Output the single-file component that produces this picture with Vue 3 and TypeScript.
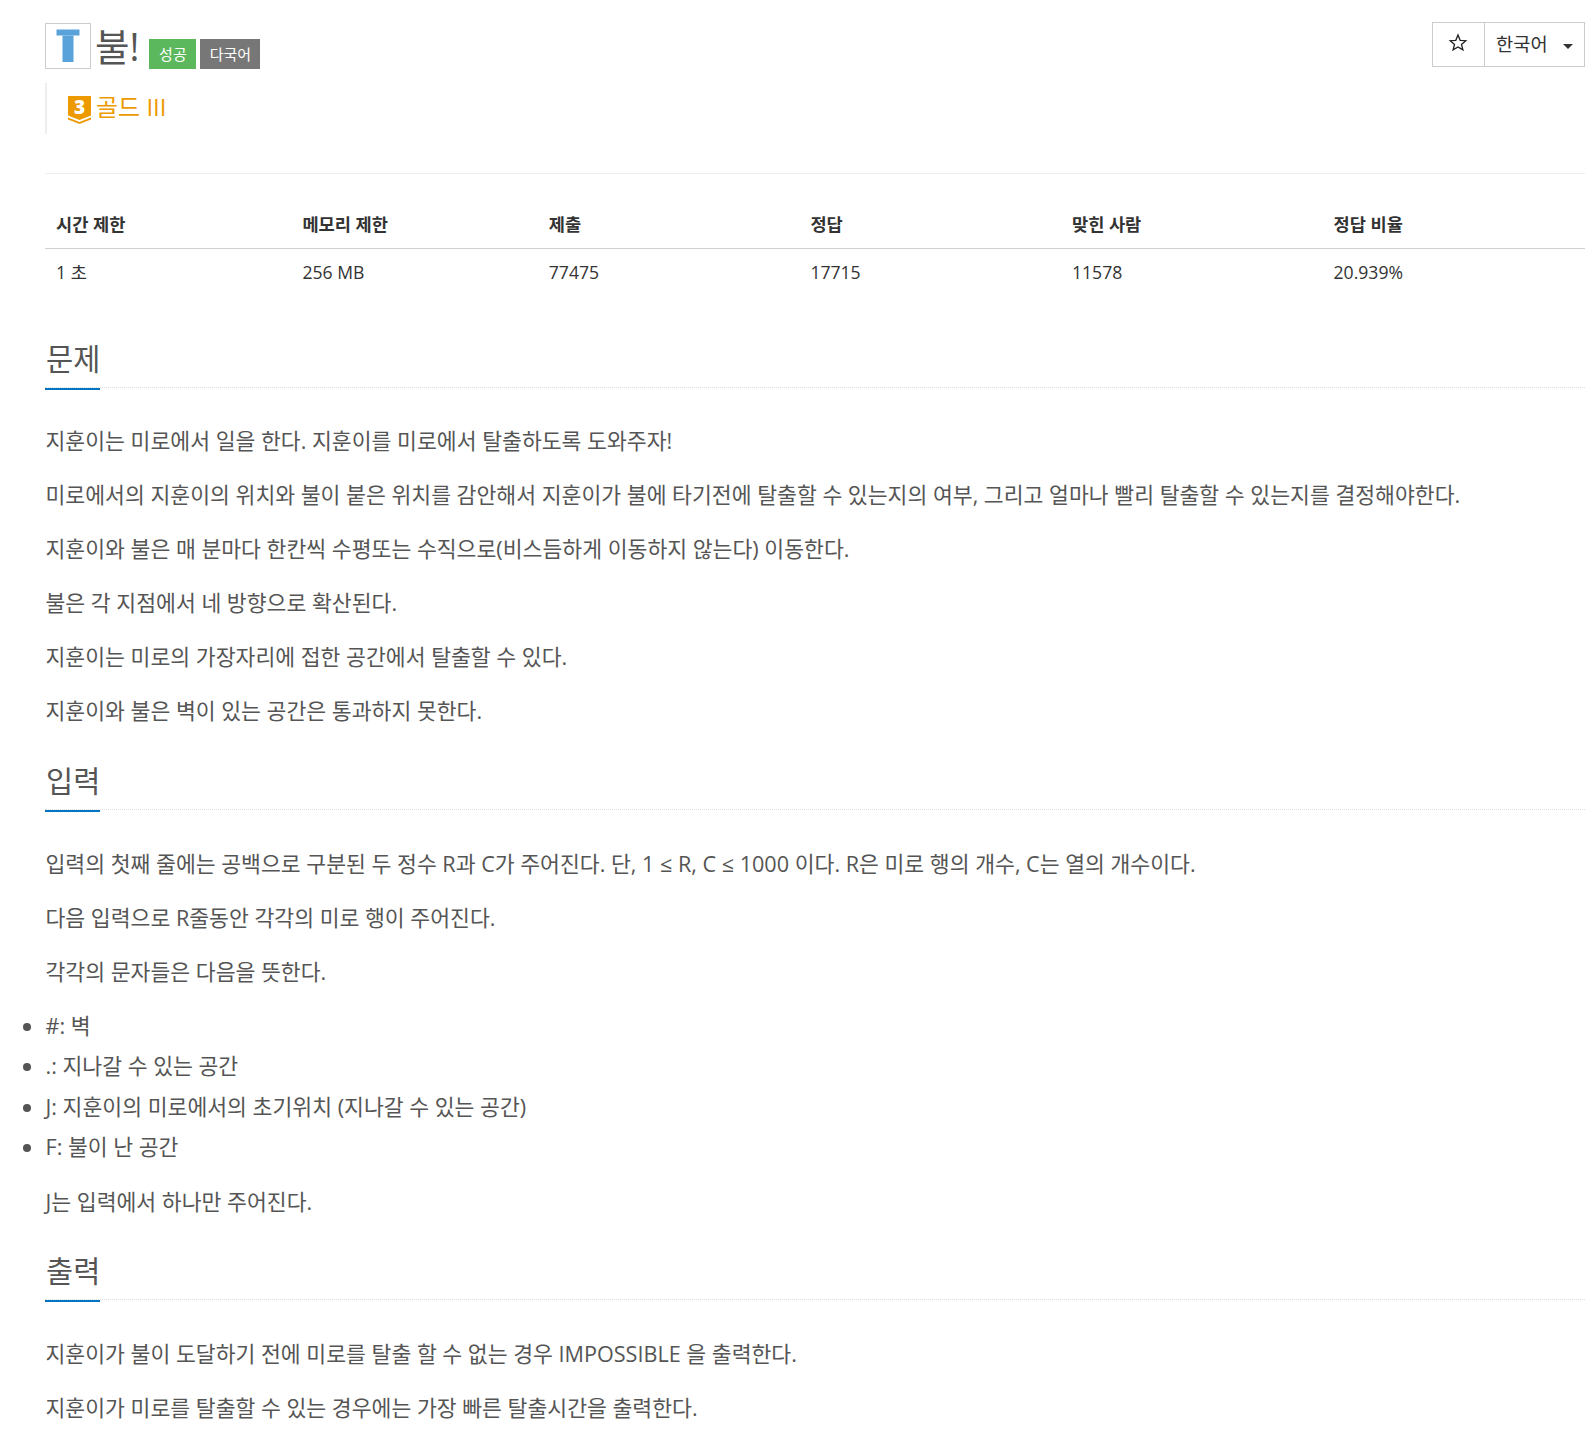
<script setup lang="ts">
const stats = [
  { label: '시간 제한', value: '1 초' },
  { label: '메모리 제한', value: '256 MB' },
  { label: '제출', value: '77475' },
  { label: '정답', value: '17715' },
  { label: '맞힌 사람', value: '11578' },
  { label: '정답 비율', value: '20.939%' }
];

const problem = [
  '지훈이는 미로에서 일을 한다. 지훈이를 미로에서 탈출하도록 도와주자!',
  '미로에서의 지훈이의 위치와 불이 붙은 위치를 감안해서 지훈이가 불에 타기전에 탈출할 수 있는지의 여부, 그리고 얼마나 빨리 탈출할 수 있는지를 결정해야한다.',
  '지훈이와 불은 매 분마다 한칸씩 수평또는 수직으로(비스듬하게 이동하지 않는다) 이동한다.',
  '불은 각 지점에서 네 방향으로 확산된다.',
  '지훈이는 미로의 가장자리에 접한 공간에서 탈출할 수 있다.',
  '지훈이와 불은 벽이 있는 공간은 통과하지 못한다.'
];

const input = [
  '입력의 첫째 줄에는 공백으로 구분된 두 정수 R과 C가 주어진다. 단, 1 ≤ R, C ≤ 1000 이다. R은 미로 행의 개수, C는 열의 개수이다.',
  '다음 입력으로 R줄동안 각각의 미로 행이 주어진다.',
  '각각의 문자들은 다음을 뜻한다.'
];

const legend = ['#: 벽', '.: 지나갈 수 있는 공간', 'J: 지훈이의 미로에서의 초기위치 (지나갈 수 있는 공간)', 'F: 불이 난 공간'];

const output = [
  '지훈이가 불이 도달하기 전에 미로를 탈출 할 수 없는 경우 IMPOSSIBLE 을 출력한다.',
  '지훈이가 미로를 탈출할 수 있는 경우에는 가장 빠른 탈출시간을 출력한다.'
];
</script>

<template>
  <div class="page">
    <header class="head">
      <div class="title-row">
        <span class="logo">
          <svg width="44" height="44" viewBox="0 0 44 44">
            <path d="M10.500 5.500h23v6h-23z" fill="#5aa2da" />
            <path d="M16.500 11.500h11v26.500h-11z" fill="#5aa2da" />
          </svg>
        </span>
        <h1 class="title">불!</h1>
        <span class="badge ok">성공</span>
        <span class="badge multi">다국어</span>
        <div class="btn-group">
          <span class="btn star">
            <svg width="20" height="20" viewBox="0 0 20 20">
              <path d="M10 2l2.200 5.300 5.600.4-4.300 3.700 1.400 5.500-4.900-3-4.900 3 1.400-5.500-4.300-3.700 5.600-.4z" fill="none" stroke="#222" stroke-width="1.300" />
            </svg>
          </span>
          <span class="btn lang">한국어<i class="caret"></i></span>
        </div>
      </div>
      <div class="tier">
        <span class="tier-icon">
          <svg width="23" height="28" viewBox="0 0 23 28">
            <path d="M0 0h23v19.500l-11.500 4.500-11.500-4.500z" fill="#ec9a00" />
            <path d="M0 21.500l11.500 4.500 11.500-4.500v2l-11.500 4.500-11.500-4.500z" fill="#ec9a00" />
          </svg>
          <span class="tier-num">3</span>
        </span>
        <span class="tier-name">골드 III</span>
      </div>
    </header>

    <div class="stats">
      <div v-for="s in stats" :key="s.label" class="stat-head">{{ s.label }}</div>
      <div v-for="s in stats" :key="s.value" class="stat-cell">{{ s.value }}</div>
    </div>

    <section class="sec sec-first">
      <h2 class="sec-title"><span>문제</span></h2>
      <p v-for="t in problem" :key="t">{{ t }}</p>
    </section>

    <section class="sec">
      <h2 class="sec-title"><span>입력</span></h2>
      <p v-for="t in input" :key="t">{{ t }}</p>
      <ul>
        <li v-for="t in legend" :key="t">{{ t }}</li>
      </ul>
      <p>J는 입력에서 하나만 주어진다.</p>
    </section>

    <section class="sec sec-last">
      <h2 class="sec-title"><span>출력</span></h2>
      <p v-for="t in output" :key="t">{{ t }}</p>
    </section>
  </div>
</template>

<style>
html,
body {
  margin: 0;
  background: #fff;
}
</style>

<style scoped>
.page {
  box-sizing: border-box;
  width: 1596px;
  height: 1451px;
  overflow: hidden;
  padding: 22px 11px 0 45px;
  font-family: "Open Sans", "Noto Sans CJK KR", sans-serif;
  color: #555;
  font-size: 21.6px;
}
.head {
  height: 151px;
  border-bottom: 1px solid #eee;
}
.title-row {
  display: flex;
  align-items: flex-start;
  height: 61px;
}
.logo {
  box-sizing: border-box;
  width: 46px;
  height: 46px;
  border: 1px solid #ccc;
  margin-top: 1px;
}
.logo svg {
  display: block;
}
.title {
  margin: 2px 0 0 4px;
  font-size: 37.5px;
  font-weight: 400;
  line-height: 46px;
  color: #555;
}
.badge {
  box-sizing: border-box;
  margin-top: 17px;
  height: 30px;
  line-height: 30px;
  text-align: center;
  font-size: 15px;
  color: #fff;
}
.ok {
  width: 47px;
  background: #5cb85c;
  margin-left: 10px;
  margin-right: 4px;
}
.multi {
  width: 60px;
  background: #777;
}
.btn-group {
  display: flex;
  margin-left: auto;
  height: 45px;
  border: 1px solid #ccc;
  box-sizing: border-box;
}
.btn {
  display: flex;
  align-items: center;
  box-sizing: border-box;
  color: #333;
  font-size: 18.7px;
  padding-bottom: 4px;
}
.star {
  width: 52px;
  justify-content: center;
  border-right: 1px solid #ccc;
  padding-right: 1px;
}
.lang {
  width: 99px;
  padding-left: 11px;
}
.caret {
  margin-left: 15px;
  margin-top: 8px;
  border-left: 5px solid transparent;
  border-right: 5px solid transparent;
  border-top: 5px solid #333;
}
.tier {
  display: flex;
  align-items: center;
  height: 51px;
  border-left: 2px solid #eee;
  padding-left: 21px;
  font-size: 24px;
  color: #ec9a00;
  gap: 5px;
}
.tier-icon {
  position: relative;
  display: block;
  width: 23px;
  height: 28px;
  margin-top: 3px;
}
.tier-icon svg {
  display: block;
}
.tier-num {
  position: absolute;
  left: 0;
  right: 0;
  top: 0;
  text-align: center;
  font-size: 19px;
  line-height: 22px;
  font-weight: 800;
  color: #fff;
}
.tier-name {
  margin-bottom: 6px;
}
.stats {
  display: grid;
  grid-template-columns: 246.4px 246.4px 261.6px 261.6px 261.6px 1fr;
  margin-top: 29px;
  margin-bottom: 41px;
  color: #333;
  font-size: 17.6px;
}
.stat-head {
  height: 46px;
  line-height: 42px;
  padding-left: 11px;
  font-weight: 700;
  border-bottom: 1px solid #d0d0d0;
  box-sizing: border-box;
}
.stat-cell {
  line-height: 46px;
  padding-left: 11px;
}
.sec-title {
  box-sizing: border-box;
  margin: 0;
  border-bottom: 1px dotted #ddd;
  font-size: 29.5px;
  font-weight: 400;
  line-height: 45px;
  height: 52px;
  color: #555;
}
.sec-title span {
  display: block;
  box-sizing: border-box;
  height: 54px;
  border-bottom: 2px solid #0076c0;
  width: 55px;
  padding-left: 1px;
  white-space: nowrap;
}
.sec {
  margin-top: 26.5px;
}
.sec-first {
  margin-top: 0;
  margin-bottom: 27px;
}
p {
  margin: 0 0 14px;
  line-height: 40px;
  padding-left: 0.5px;
}
.sec-title + p {
  margin-top: 34.5px;
}
.sec-first .sec-title + p {
  margin-top: 32.5px;
}
.sec-last .sec-title + p {
  margin-top: 33.5px;
}
ul {
  margin: 0 0 14px;
  padding: 0;
  list-style: disc;
}
li {
  line-height: 40.4px;
  padding-left: 0.5px;
}
</style>
